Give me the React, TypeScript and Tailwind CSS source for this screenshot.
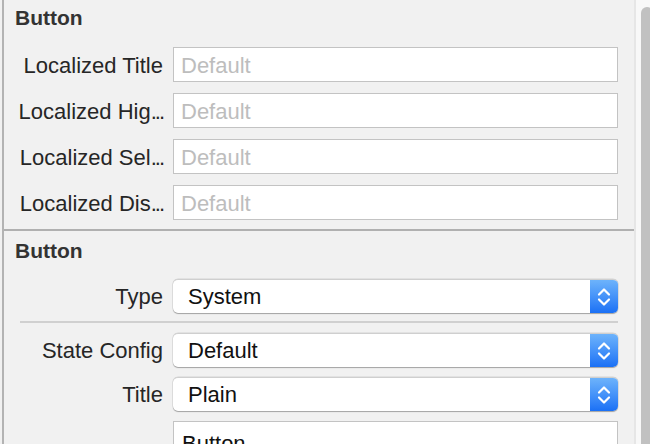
import type { ReactNode } from 'react';

const font = { fontFamily: '"Liberation Sans", Arial, sans-serif' };

function SectionHeader({ children, className = '' }: { children: ReactNode; className?: string }) {
  return (
    <div className={`flex items-center pl-[11px] text-[21px] font-bold text-[#333333] ${className}`}>
      {children}
    </div>
  );
}

function Row({ label, clipped, children, className = '' }: { label: string; clipped?: boolean; children: ReactNode; className?: string }) {
  return (
    <div className={`flex items-center pr-[16px] ${className}`}>
      <div className="w-[159px] shrink-0 whitespace-nowrap pt-[1px] text-right text-[22px] text-[#262626]">
        {label}
        {clipped && <span className="tracking-[-2px]">...</span>}
      </div>
      <div className="ml-[10px] flex-1">{children}</div>
    </div>
  );
}

function TextField({ placeholder, value }: { placeholder?: string; value?: string }) {
  return (
    <div className="flex h-[35px] items-center border border-solid border-[#c3c3c3] bg-white pl-[7px] pt-[1px] text-[22px]">
      {value ? (
        <span className="text-[#111111]">{value}</span>
      ) : (
        <span className="text-[#bdbdbd]">{placeholder}</span>
      )}
    </div>
  );
}

function PopUp({ value }: { value: string }) {
  return (
    <div className="flex h-[34px] overflow-hidden rounded-[5px] border-t border-solid border-[#cfcfcf] bg-white shadow-[0_1px_1px_rgba(0,0,0,0.28),0_0_0_0.5px_rgba(0,0,0,0.12)]">
      <div className="flex flex-1 items-center pl-[15px] text-[22px] text-[#111111]">{value}</div>
      <div className="flex w-[28px] items-center justify-center bg-gradient-to-b from-[#6db3fb] to-[#1a70f5]">
        <svg width="14" height="22" viewBox="0 0 14 22" fill="none">
          <path d="M2 8.5 L7 3.5 L12 8.5" stroke="white" strokeWidth="2.2" strokeLinecap="round" strokeLinejoin="round" />
          <path d="M2 13.5 L7 18.5 L12 13.5" stroke="white" strokeWidth="2.2" strokeLinecap="round" strokeLinejoin="round" />
        </svg>
      </div>
    </div>
  );
}

export default function App() {
  return (
    <div className="flex h-[444px] w-[650px] overflow-hidden bg-[#f1f1f1]" style={font}>
      <div className="ml-[2px] flex-1 border-l-2 border-solid border-[#b3b3b3]">
        <section className="border-b-2 border-solid border-[#b0b0b0] pb-[9px]">
          <SectionHeader className="h-[36px]">Button</SectionHeader>
          <Row label="Localized Title" className="mt-[11px]">
            <TextField placeholder="Default" />
          </Row>
          <Row label="Localized Hig" clipped className="mt-[11px]">
            <TextField placeholder="Default" />
          </Row>
          <Row label="Localized Sel" clipped className="mt-[11px]">
            <TextField placeholder="Default" />
          </Row>
          <Row label="Localized Dis" clipped className="mt-[11px]">
            <TextField placeholder="Default" />
          </Row>
        </section>

        <section>
          <SectionHeader className="h-[40px]">Button</SectionHeader>
          <Row label="Type" className="mt-[8px]">
            <PopUp value="System" />
          </Row>
          <div className="ml-[16px] mr-[16px] mt-[8px] h-[2px] bg-[#d0d0d0]" />
          <Row label="State Config" className="mt-[10px]">
            <PopUp value="Default" />
          </Row>
          <Row label="Title" className="mt-[10px]">
            <PopUp value="Plain" />
          </Row>
          <Row label="" className="mt-[10px] items-start">
            <div className="flex h-[60px] items-start border border-solid border-[#c3c3c3] bg-white pl-[8px] pt-[5px] text-[22px] text-[#111111]">
              Button
            </div>
          </Row>
        </section>
      </div>

      <div className="flex w-[16px] shrink-0 overflow-hidden border-l-2 border-solid border-[#e6e6e6] bg-[#f8f8f8] pl-[5px] pt-[7px]">
        <div className="h-[600px] w-[12px] shrink-0 rounded-[6px] bg-[#c1c1c1]" />
      </div>
    </div>
  );
}
